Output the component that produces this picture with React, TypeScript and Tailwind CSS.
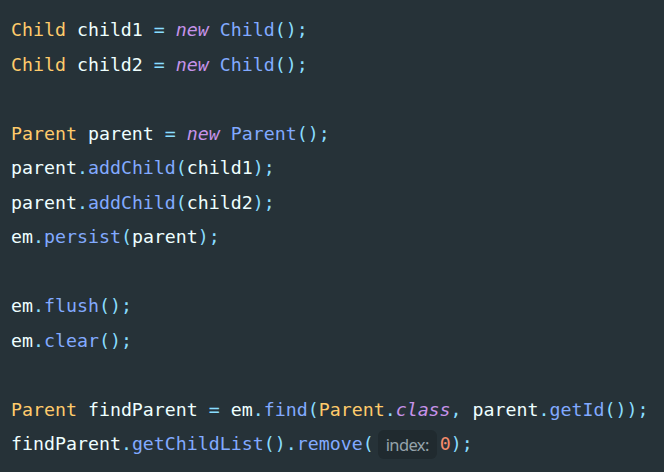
import React from "react";

type Tok = [string, string];

const T = "text-[#ffcb6b]"; // type
const V = "text-[#eeffff]"; // variable
const P = "text-[#89ddff]"; // punctuation / operators
const K = "text-[#c792ea] italic"; // keyword
const F = "text-[#82aaff]"; // function
const N = "text-[#f78c6c]"; // number

const lines: (Tok[] | null)[] = [
  [[T, "Child"], [V, " child1 "], [P, "="], [V, " "], [K, "new"], [V, " "], [F, "Child"], [P, "();"]],
  [[T, "Child"], [V, " child2 "], [P, "="], [V, " "], [K, "new"], [V, " "], [F, "Child"], [P, "();"]],
  null,
  [[T, "Parent"], [V, " parent "], [P, "="], [V, " "], [K, "new"], [V, " "], [F, "Parent"], [P, "();"]],
  [[V, "parent"], [P, "."], [F, "addChild"], [P, "("], [V, "child1"], [P, ");"]],
  [[V, "parent"], [P, "."], [F, "addChild"], [P, "("], [V, "child2"], [P, ");"]],
  [[V, "em"], [P, "."], [F, "persist"], [P, "("], [V, "parent"], [P, ");"]],
  null,
  [[V, "em"], [P, "."], [F, "flush"], [P, "();"]],
  [[V, "em"], [P, "."], [F, "clear"], [P, "();"]],
  null,
  [
    [T, "Parent"], [V, " findParent "], [P, "="], [V, " em"], [P, "."], [F, "find"], [P, "("],
    [T, "Parent"], [P, "."], [K, "class"], [P, ","], [V, " parent"], [P, "."], [F, "getId"], [P, "());"],
  ],
];

export default function App() {
  return (
    <div className="w-[664px] h-[472px] bg-[#263238] overflow-hidden pt-[13px] pl-[11px] font-['DejaVu_Sans_Mono',monospace] text-[18.25px] leading-[34.5px] whitespace-pre">
      {lines.map((l, i) => (
        <div key={i} className="h-[34.5px]">
          {l && l.map(([c, s], j) => <span key={j} className={c}>{s}</span>)}
        </div>
      ))}
      <div className="h-[34.5px] flex items-center">
        <span className={V}>findParent</span>
        <span className={P}>.</span>
        <span className={F}>getChildList</span>
        <span className={P}>().</span>
        <span className={F}>remove</span>
        <span className={P}>(</span>
        <span className="ml-[4px] mr-[3px] h-[29px] px-[8px] rounded-[6px] bg-[#202a2f] text-[#95a3ab] font-['Noto_Sans',sans-serif] text-[16.5px] leading-[29px] tracking-[-0.6px]">index:</span>
        <span className={N}>0</span>
        <span className={P}>);</span>
      </div>
    </div>
  );
}
